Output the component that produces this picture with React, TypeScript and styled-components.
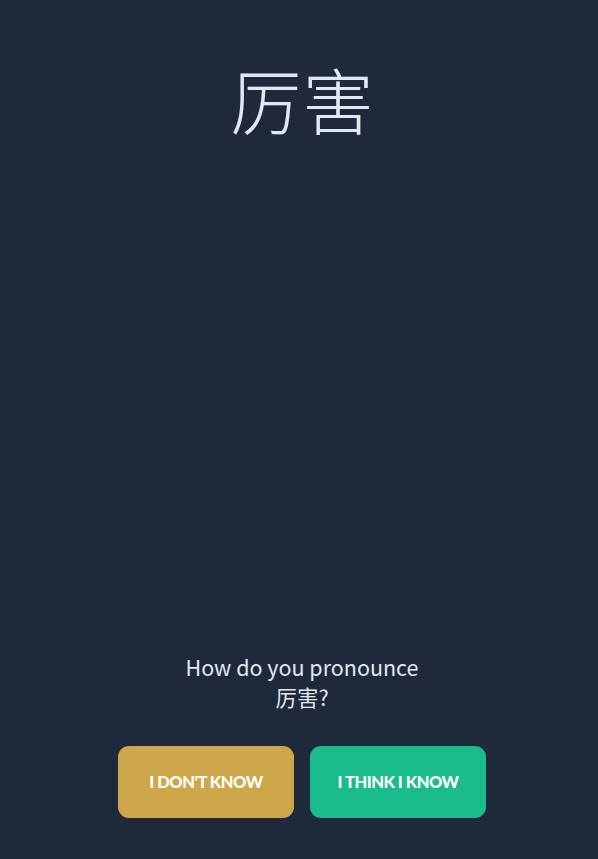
import React from "react";
import styled, { createGlobalStyle } from "styled-components";

const Global = createGlobalStyle`
  html, body { margin: 0; padding: 0; background: #1e293b; }
  body { font-family: "Noto Sans CJK SC", sans-serif; }
`;

const Page = styled.div`
  box-sizing: border-box;
  height: 859px;
  display: flex;
  flex-direction: column;
  align-items: center;
  justify-content: space-between;
  padding: 50px 0 41px 6px;
  background: #1e293b;
  color: #e2e8f0;
`;

const Word = styled.h1`
  margin: 0;
  font-family: "Noto Sans CJK SC", sans-serif;
  font-weight: 300;
  font-size: 72px;
  line-height: 96px;
  color: #e2e8f0;
`;

const Bottom = styled.div`
  display: flex;
  flex-direction: column;
  align-items: center;
  gap: 34px;
`;

const Question = styled.p`
  margin: 0;
  text-align: center;
  font-family: "Noto Sans CJK SC", sans-serif;
  font-weight: 400;
  font-size: 21.5px;
  line-height: 30px;
  color: #e2e8f0;
`;

const Buttons = styled.div`
  display: flex;
  gap: 16px;
`;

const Button = styled.button<{ $tone: "gold" | "green" }>`
  width: 176px;
  height: 72px;
  border: none;
  border-radius: 11px;
  background: ${(p) => (p.$tone === "gold" ? "#cfa74b" : "#1bbc8b")};
  color: #ffffff;
  font-family: Lato, sans-serif;
  font-weight: 900;
  font-size: 16.5px;
  letter-spacing: -0.5px;
  text-transform: uppercase;
  cursor: pointer;
`;

export default function App() {
  return (
    <>
      <Global />
      <Page>
        <Word>厉害</Word>
        <Bottom>
          <Question>
            How do you pronounce
            <br />
            厉害?
          </Question>
          <Buttons>
            <Button $tone="gold">I don't know</Button>
            <Button $tone="green">I think I know</Button>
          </Buttons>
        </Bottom>
      </Page>
    </>
  );
}
